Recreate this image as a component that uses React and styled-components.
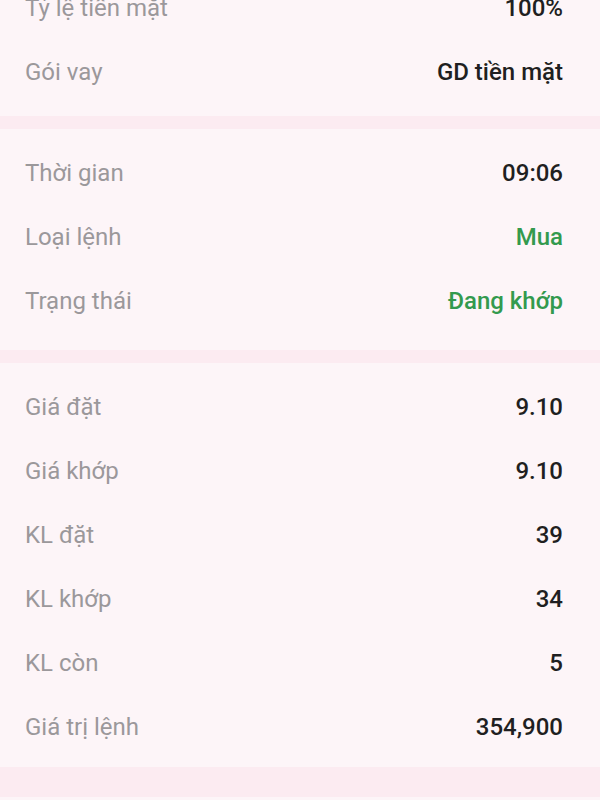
import React from "react";
import styled, { createGlobalStyle } from "styled-components";

const cardBg = "#fdf5f8";
const gapBg = "#fcebf1";

const GlobalStyle = createGlobalStyle`
  html, body {
    margin: 0;
    padding: 0;
    background: ${gapBg};
    overflow: hidden;
  }
  body {
    font-family: Roboto, "Noto Sans", "Liberation Sans", sans-serif;
    -webkit-font-smoothing: antialiased;
  }
`;

// the detail screen is scrolled a little, so the first card starts above the top edge
const Screen = styled.div`
  width: 600px;
  height: 800px;
  overflow: hidden;
`;

const Scroller = styled.div`
  display: flex;
  flex-direction: column;
  gap: 13px;
  margin-top: -36px;
`;

const Card = styled.section`
  background: ${cardBg};
  padding: 12px 37px ${(p) => p.$padBottom || 12}px 25px;
  margin-top: ${(p) => p.$offset || 0}px;
  display: flex;
  flex-direction: column;
`;

const Row = styled.div`
  height: 64px;
  display: flex;
  align-items: center;
  justify-content: space-between;
  font-size: 24px;
`;

const Label = styled.span`
  color: #9b989b;
  font-weight: 400;
`;

const Value = styled.span`
  color: ${(p) => (p.$green ? "#339a4e" : "#1f1f21")};
  font-weight: 500;
`;

const sections = [
  {
    rows: [
      ["Tỷ lệ tiền mặt", "100%"],
      ["Gói vay", "GD tiền mặt"],
    ],
  },
  {
    padBottom: 17,
    rows: [
      ["Thời gian", "09:06"],
      ["Loại lệnh", "Mua", true],
      ["Trạng thái", "Đang khớp", true],
    ],
  },
  {
    padBottom: 8,
    rows: [
      ["Giá đặt", "9.10"],
      ["Giá khớp", "9.10"],
      ["KL đặt", "39"],
      ["KL khớp", "34"],
      ["KL còn", "5"],
      ["Giá trị lệnh", "354,900"],
    ],
  },
  {
    offset: 17,
    rows: [
      ["Phí giao dịch", "532"],
      ["Thuế", "0"],
    ],
  },
];

export default function App() {
  return (
    <Screen>
      <GlobalStyle />
      <Scroller>
        {sections.map((section, i) => (
          <Card key={i} $padBottom={section.padBottom} $offset={section.offset}>
            {section.rows.map(([label, value, green]) => (
              <Row key={label}>
                <Label>{label}</Label>
                <Value $green={green}>{value}</Value>
              </Row>
            ))}
          </Card>
        ))}
      </Scroller>
    </Screen>
  );
}
